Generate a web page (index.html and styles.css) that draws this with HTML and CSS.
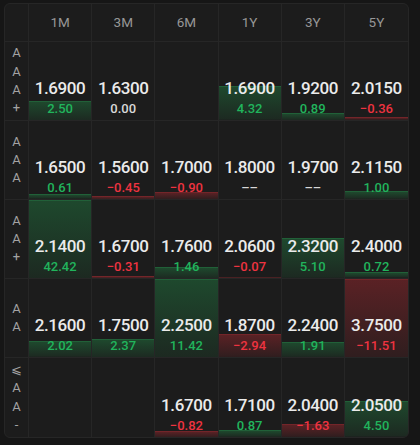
FILE: index.html
```html
<!DOCTYPE html>
<html lang="en">
<head>
    <meta charset="UTF-8">
    <meta name="viewport" content="width=device-width, initial-scale=1.0">
    <title>Yield Matrix</title>
    <link rel="stylesheet" href="styles.css">
</head>
<body>
    <div class="matrix">
        <div class="corner"></div>
        <div class="head">1M</div>
        <div class="head">3M</div>
        <div class="head">6M</div>
        <div class="head">1Y</div>
        <div class="head">3Y</div>
        <div class="head">5Y</div>

        <div class="rating"><span>A</span><span>A</span><span>A</span><span>+</span></div>
        <div class="cell up" style="--h:25%"><span class="val">1.6900</span><span class="chg">2.50</span></div>
        <div class="cell flat"><span class="val">1.6300</span><span class="chg">0.00</span></div>
        <div class="cell"></div>
        <div class="cell up" style="--h:43.2%"><span class="val">1.6900</span><span class="chg">4.32</span></div>
        <div class="cell up" style="--h:8.9%"><span class="val">1.9200</span><span class="chg">0.89</span></div>
        <div class="cell down" style="--h:3.6%"><span class="val">2.0150</span><span class="chg">−0.36</span></div>

        <div class="rating"><span>A</span><span>A</span><span>A</span></div>
        <div class="cell up" style="--h:6.1%"><span class="val">1.6500</span><span class="chg">0.61</span></div>
        <div class="cell down" style="--h:4.5%"><span class="val">1.5600</span><span class="chg">−0.45</span></div>
        <div class="cell down" style="--h:9%"><span class="val">1.7000</span><span class="chg">−0.90</span></div>
        <div class="cell flat"><span class="val">1.8000</span><span class="chg">––</span></div>
        <div class="cell flat"><span class="val">1.9700</span><span class="chg">––</span></div>
        <div class="cell up" style="--h:10%"><span class="val">2.1150</span><span class="chg">1.00</span></div>

        <div class="rating"><span>A</span><span>A</span><span>+</span></div>
        <div class="cell up" style="--h:100%"><span class="val">2.1400</span><span class="chg">42.42</span></div>
        <div class="cell down" style="--h:3.1%"><span class="val">1.6700</span><span class="chg">−0.31</span></div>
        <div class="cell up" style="--h:14.6%"><span class="val">1.7600</span><span class="chg">1.46</span></div>
        <div class="cell down" style="--h:0.7%"><span class="val">2.0600</span><span class="chg">−0.07</span></div>
        <div class="cell up" style="--h:51%"><span class="val">2.3200</span><span class="chg">5.10</span></div>
        <div class="cell up" style="--h:7.2%"><span class="val">2.4000</span><span class="chg">0.72</span></div>

        <div class="rating"><span>A</span><span>A</span></div>
        <div class="cell up" style="--h:20.2%"><span class="val">2.1600</span><span class="chg">2.02</span></div>
        <div class="cell up" style="--h:23.7%"><span class="val">1.7500</span><span class="chg">2.37</span></div>
        <div class="cell up" style="--h:100%"><span class="val">2.2500</span><span class="chg">11.42</span></div>
        <div class="cell down" style="--h:29.4%"><span class="val">1.8700</span><span class="chg">−2.94</span></div>
        <div class="cell up" style="--h:19.1%"><span class="val">2.2400</span><span class="chg">1.91</span></div>
        <div class="cell down" style="--h:100%"><span class="val">3.7500</span><span class="chg">−11.51</span></div>

        <div class="rating"><span>⩽</span><span>A</span><span>A</span><span>-</span></div>
        <div class="cell"></div>
        <div class="cell"></div>
        <div class="cell down" style="--h:8.2%"><span class="val">1.6700</span><span class="chg">−0.82</span></div>
        <div class="cell up" style="--h:8.7%"><span class="val">1.7100</span><span class="chg">0.87</span></div>
        <div class="cell down" style="--h:16.3%"><span class="val">2.0400</span><span class="chg">−1.63</span></div>
        <div class="cell up" style="--h:45%"><span class="val">2.0500</span><span class="chg">4.50</span></div>
    </div>
</body>
</html>
```

FILE: styles.css
```css
body {
    margin: 0;
    padding: 3px 0 0 4px;
    background-color: #161616;
    font-family: Roboto, "Liberation Sans", sans-serif;
}
.matrix {
    width: 403px;
    display: grid;
    grid-template-columns: 24px repeat(6, 1fr);
    grid-template-rows: 38px repeat(5, 79px);
    background-color: #1c1c1c;
    border: 1px solid #262626;
    border-radius: 6px;
    overflow: hidden;
}
.matrix > div {
    box-sizing: border-box;
    border-right: 1px solid #262626;
    border-bottom: 1px solid #262626;
}
.matrix > div:nth-child(7n) {
    border-right: none;
}
.matrix > div:nth-last-child(-n+7) {
    border-bottom: none;
}
.head {
    display: flex;
    align-items: center;
    justify-content: center;
    padding-bottom: 2px;
    color: #979797;
    font-size: 13.5px;
}
.rating {
    display: flex;
    flex-direction: column;
    align-items: center;
    justify-content: center;
    color: #a3a3a3;
    font-size: 13px;
    line-height: 18.3px;
}
.cell {
    display: flex;
    flex-direction: column;
    align-items: center;
    justify-content: flex-end;
    padding-bottom: 3px;
    background-repeat: no-repeat;
    background-position: left bottom;
    background-size: 100% var(--h, 0);
}
.cell.up {
    background-image: linear-gradient(to bottom, rgba(40, 190, 95, 0.42) 0, rgba(40, 190, 95, 0.42) 1px, rgba(35, 175, 85, 0.3) 1px, rgba(35, 175, 85, 0.09) 100%);
}
.cell.down {
    background-image: linear-gradient(to bottom, rgba(235, 50, 60, 0.42) 0, rgba(235, 50, 60, 0.42) 1px, rgba(220, 45, 55, 0.32) 1px, rgba(220, 45, 55, 0.1) 100%);
}
.val {
    color: #ebebeb;
    font-size: 17px;
    font-weight: 500;
    line-height: 20px;
    letter-spacing: -0.4px;
    margin-bottom: 3px;
}
.chg {
    font-size: 13px;
    font-weight: 500;
    line-height: 16px;
}
.up .chg {
    color: #21b45c;
}
.down .chg {
    color: #ee3340;
}
.flat .chg {
    color: #d8d8d8;
}
```
